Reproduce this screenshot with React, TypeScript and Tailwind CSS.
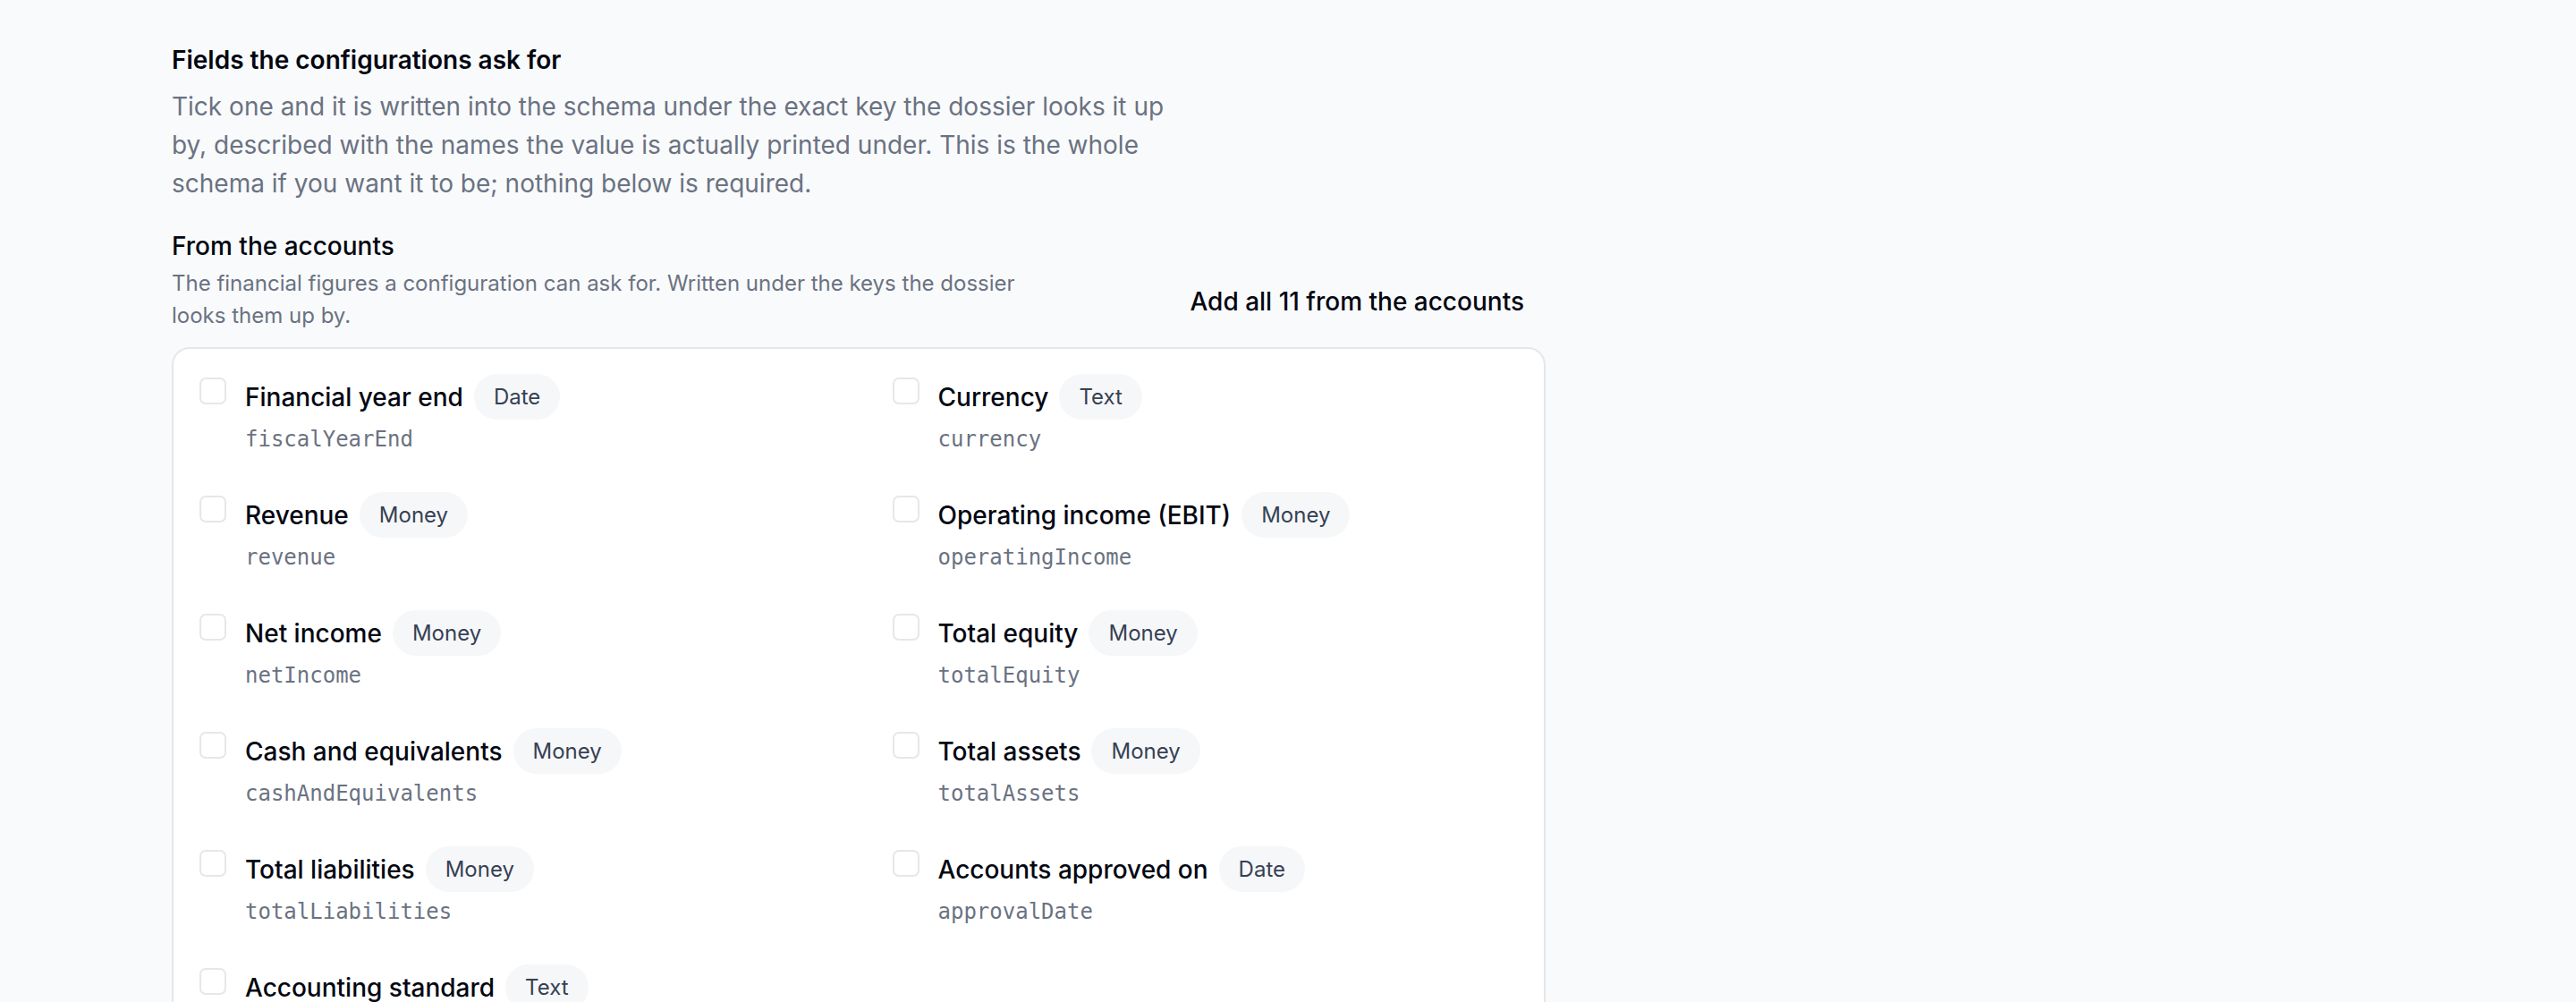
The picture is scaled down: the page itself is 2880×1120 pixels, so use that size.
import React, { useState } from 'react';

type Field = {
  label: string;
  kind: 'Date' | 'Text' | 'Money';
  path: string;
};

const accountFields: Field[] = [
  { label: 'Financial year end', kind: 'Date', path: 'fiscalYearEnd' },
  { label: 'Currency', kind: 'Text', path: 'currency' },
  { label: 'Revenue', kind: 'Money', path: 'revenue' },
  { label: 'Operating income (EBIT)', kind: 'Money', path: 'operatingIncome' },
  { label: 'Net income', kind: 'Money', path: 'netIncome' },
  { label: 'Total equity', kind: 'Money', path: 'totalEquity' },
  { label: 'Cash and equivalents', kind: 'Money', path: 'cashAndEquivalents' },
  { label: 'Total assets', kind: 'Money', path: 'totalAssets' },
  { label: 'Total liabilities', kind: 'Money', path: 'totalLiabilities' },
  { label: 'Accounts approved on', kind: 'Date', path: 'approvalDate' },
  { label: 'Accounting standard', kind: 'Text', path: 'accountingStandard' },
];

const FieldOption = ({
  field,
  checked,
  onToggle,
}: {
  field: Field;
  checked: boolean;
  onToggle: () => void;
}) => (
  <label className="flex items-start gap-[21px] cursor-pointer">
    <input
      type="checkbox"
      checked={checked}
      onChange={onToggle}
      className="mt-[4px] h-[30px] w-[30px] shrink-0 appearance-none rounded-[7px] border-2 border-[#e5e7eb] bg-white checked:bg-gray-900"
    />
    <div className="flex flex-col">
      <div className="flex items-center gap-[12px]">
        <span className="text-[28px] font-medium leading-[36px] text-gray-950">{field.label}</span>
        <span className="flex h-[51px] items-center rounded-full bg-[#f6f7f9] px-[22px] text-[24px] leading-none text-gray-700">
          {field.kind}
        </span>
      </div>
      <code className="mt-[4px] font-['DejaVu_Sans_Mono',monospace] text-[24px] leading-[36px] text-gray-500">
        {field.path}
      </code>
    </div>
  </label>
);

export default function App() {
  const [selected, setSelected] = useState<string[]>([]);

  const toggle = (path: string) =>
    setSelected((prev) => (prev.includes(path) ? prev.filter((p) => p !== path) : [...prev, path]));

  return (
    <div className="min-h-screen bg-gray-50 font-['Inter',sans-serif]">
      <div className="ml-[192px] w-[1536px] pt-[47px]">
        <h2 className="text-[28px] font-semibold leading-[40px] text-gray-950">
          Fields the configurations ask for
        </h2>
        <p className="mt-[11px] max-w-[1152px] text-[28px] leading-[43px] text-gray-500">
          Tick one and it is written into the schema under the exact key the dossier looks it up by,
          described with the names the value is actually printed under. This is the whole schema if
          you want it to be; nothing below is required.
        </p>

        <div className="mt-[30px]">
          <h3 className="text-[28px] font-medium leading-[36px] text-gray-950">From the accounts</h3>
          <div className="flex items-center justify-between">
            <p className="mt-[6px] max-w-[990px] text-[24px] leading-[36px] text-gray-500">
              The financial figures a configuration can ask for. Written under the keys the dossier
              looks them up by.
            </p>
            <button
              onClick={() => setSelected(accountFields.map((f) => f.path))}
              className="mt-[10px] rounded-[12px] px-[24px] py-[10px] text-[28px] font-medium leading-[36px] text-gray-950"
            >
              Add all 11 from the accounts
            </button>
          </div>

          <div className="mt-[17px] rounded-[20px] border-2 border-[#e5e7eb] bg-white px-[29px] pt-[28px] pb-[40px]">
            <div className="grid grid-cols-2 gap-x-[75px] gap-y-[41px]">
              {accountFields.map((field) => (
                <FieldOption
                  key={field.path}
                  field={field}
                  checked={selected.includes(field.path)}
                  onToggle={() => toggle(field.path)}
                />
              ))}
            </div>
          </div>
        </div>
      </div>
    </div>
  );
}
